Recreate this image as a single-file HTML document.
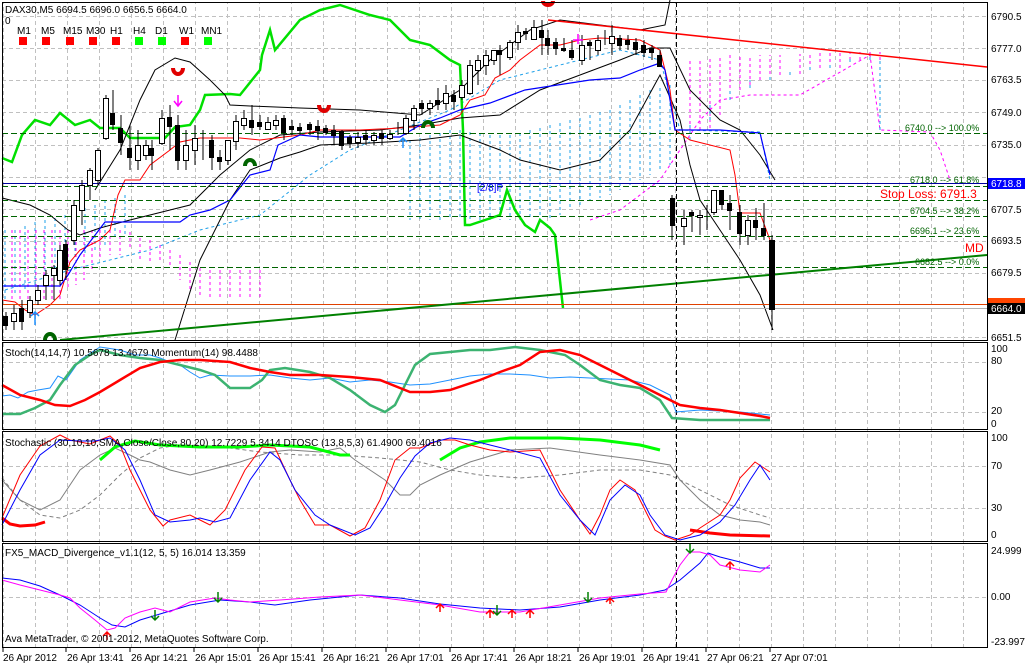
<!DOCTYPE html>
<html><head><meta charset="utf-8"><style>
html,body{margin:0;padding:0;background:#fff;width:1025px;height:664px;overflow:hidden}
svg{display:block}
text{font-family:"Liberation Sans",sans-serif;font-size:10px;fill:#000}
</style></head><body>
<svg width="1025" height="664" viewBox="0 0 1025 664" xmlns="http://www.w3.org/2000/svg">
<defs>
<pattern id="gx" x="3" y="0" width="32" height="700" patternUnits="userSpaceOnUse">
<line x1="0.5" y1="0" x2="0.5" y2="700" stroke="#c0c0c0" stroke-dasharray="4,3"/>
</pattern>
</defs>
<rect width="1025" height="664" fill="#fff"/>
<rect x="2" y="2" width="985" height="645" fill="url(#gx)"/>
<g stroke="#c0c0c0" stroke-dasharray="4,3">
<line x1="2" y1="16.5" x2="987" y2="16.5"/><line x1="2" y1="48.5" x2="987" y2="48.5"/><line x1="2" y1="80.5" x2="987" y2="80.5"/><line x1="2" y1="112.5" x2="987" y2="112.5"/><line x1="2" y1="145.5" x2="987" y2="145.5"/><line x1="2" y1="177.5" x2="987" y2="177.5"/><line x1="2" y1="209.5" x2="987" y2="209.5"/><line x1="2" y1="241.5" x2="987" y2="241.5"/><line x1="2" y1="273.5" x2="987" y2="273.5"/><line x1="2" y1="337.5" x2="987" y2="337.5"/>
<line x1="2" y1="362.5" x2="987" y2="362.5"/><line x1="2" y1="412.5" x2="987" y2="412.5"/>
<line x1="2" y1="466.5" x2="987" y2="466.5"/><line x1="2" y1="508.5" x2="987" y2="508.5"/>
<line x1="2" y1="597.5" x2="987" y2="597.5"/>
</g>

<g stroke="#ff00ff" stroke-dasharray="3,3" stroke-width="1" fill="none">
<path d="M12 230V300M20 230V300M28 230V300M36 230V300M44 230V300M52 230V300M60 230V300M68 230V290M76 230V285M84 230V280M92 230V270M100 230V260M110 230V255M120 230V255M130 232V250M140 238V262M150 240V262M160 245V262M170 250V268M180 255V280M190 262V290M200 268V295M210 270V300M220 270V300M230 270V300M240 270V300M250 270V300M260 270V298"/>
<path d="M690 130V60M700 130V58M710 128V56M720 115V55M730 100V55M740 90V55M750 85V55M760 80V55M770 80V55M780 75V55M800 74V54M810 70V53M820 68V53M830 68V53M840 68V52M850 60V52M860 60V52M870 60V52M880 60V52"/>
<path d="M590 220L620 210L640 195L660 180L680 150L700 120L720 100L750 95L800 95L870 55L880 130L930 132L940 150L950 180"/>
</g>
<g stroke="#1ea0e8" stroke-dasharray="3,3" stroke-width="1" fill="none">
<path d="M5 230V300M15 230V295M25 226V290M35 222V285M45 220V275M55 218V270M65 215V265M75 212V260M85 208V255M95 205V250M105 200V245M115 198V240M125 195V235"/>
<path d="M410 140V220M420 138V220M430 135V220M440 133V220M450 130V220M460 130V220M470 132V220M480 133V220M490 135V220M500 135V220M510 135V220M520 133V220M530 130V220M540 128V220M550 125V220M560 123V215M570 120V210M580 118V205M590 115V200M600 112V198M610 110V195M620 105V190M630 100V185M640 95V180M650 90V175M660 88V170M670 85V165"/>
<path d="M690 140V125M710 120V105M730 100V90M750 88V80M770 80V75M790 75V70M810 70V65M830 68V62M850 62V58M870 60V55M880 130V60"/>
<path d="M5 290L70 270L150 250L200 230L260 215L310 175L350 150L400 130L450 110L500 80L560 65L620 50L660 60L680 130L760 132L770 180"/>
</g>

<polyline fill="none" stroke="#00e000" stroke-width="2.5" points="2,158 12,162 22,135 35,120 50,125 60,113 75,125 90,120 100,128 120,128 130,138 150,138 165,138 175,127 190,125 200,110 205,95 230,94 240,95 260,70 262,55 270,30 275,50 300,20 320,10 340,5 370,15 390,20 410,40 430,45 450,60 460,65 463,130 465,225 470,225 500,215 507,190 515,210 525,225 535,232 540,220 550,228 555,235 563,308"/>

<g fill="none" stroke="#000" stroke-width="1">
<polyline points="95,190 120,150 140,100 155,70 175,58 190,62 210,80 225,95 230,105 250,106 300,108 360,110 420,115 460,90 490,60 530,30 560,20 600,25 640,30 665,25 670,0"/>
<polyline points="2,198 30,205 50,215 68,230 80,235 100,228 130,220 170,210 190,205 220,175 250,150 280,135 320,132 380,130 420,125 460,118 500,115 540,90 580,75 620,60 650,48 670,48 690,90 720,120 740,130 760,155 775,180"/>
<polyline points="175,340 200,260 230,200 250,170 280,158 300,152 320,145 370,143 420,140 460,135 500,150 520,160 560,170 600,160 630,130 660,75 680,120 690,165 700,200 720,230 740,260 760,295 773,330"/>
</g>
<polyline fill="none" stroke="#ff0000" stroke-width="1" points="2,300 15,302 25,310 35,315 50,305 60,295 70,262 80,250 100,240 110,230 118,195 125,180 140,180 150,165 170,150 180,142 200,138 240,138 260,140 300,135 320,130 360,130 400,128 440,125 460,115 470,100 485,95 495,78 510,70 520,60 540,45 560,45 580,40 600,38 640,40 660,50 670,90 675,130 690,140 730,150 735,175 740,213 760,213 770,240"/>
<polyline fill="none" stroke="#0000ff" stroke-width="1.2" points="2,286 60,286 68,275 80,255 105,222 180,222 190,215 210,210 230,200 250,175 270,170 278,145 300,135 320,137 360,137 400,137 420,125 440,118 460,110 490,103 525,90 590,80 620,78 640,70 660,63 665,70 675,130 720,130 760,133 770,175"/>

<g stroke="#006400" stroke-dasharray="6,3" stroke-width="1">
<line x1="2" y1="133.5" x2="987" y2="133.5"/><line x1="2" y1="186.5" x2="987" y2="186.5"/><line x1="2" y1="200.5" x2="987" y2="200.5"/><line x1="2" y1="216.5" x2="987" y2="216.5"/><line x1="2" y1="236.5" x2="987" y2="236.5"/><line x1="2" y1="267.5" x2="987" y2="267.5"/>
</g>
<line x1="2" y1="183.5" x2="987" y2="183.5" stroke="#0000a0"/>
<line x1="2" y1="304.5" x2="987" y2="304.5" stroke="#e04000"/>
<line x1="2" y1="308.5" x2="987" y2="308.5" stroke="#b0b0b0"/>
<line x1="60" y1="340" x2="987" y2="255" stroke="#008000" stroke-width="2"/>
<line x1="548" y1="20" x2="987" y2="67" stroke="#ff0000" stroke-width="1.5"/>
<line x1="676.5" y1="2" x2="676.5" y2="647" stroke="#000" stroke-dasharray="5,3"/>

<g stroke="#000" stroke-width="1">
<path d="M6 312V330M14 305V330M22 300V330M30 296V318M38 285V305M46 270V300M54 265V300M60 245V285M66 240V280M74 200V245M82 180V225M90 168V200M98 148V185M106 95V140M113 90V130M121 115V155M130 125V170M138 130V170M146 140V160M152 140V170M162 110V145M170 105V150M178 115V170M186 130V170M195 125V165M203 130V160M212 135V170M220 150V170M228 140V165M236 115V150M244 110V130M252 105V135M260 115V130M268 117V130M276 115V130M284 115V140M292 120V135M300 123V135M310 122V135M318 120V140M326 125V135M334 125V145M342 130V150M350 135V148M358 132V148M366 130V145M374 132V145M382 130V145M390 130V140M398 122V135M406 115V135M414 105V130M422 100V115M430 100V115M438 88V110M446 85V110M454 90V110M462 80V100M470 60V95M478 55V85M486 50V75M494 50V65M500 45V75M510 40V60M518 25V50M526 28V40M534 20V40M542 20V55M548 30V55M556 38V55M564 38V52M572 40V60M582 35V65M590 40V60M598 35V55M605 30V45M612 25V55M620 35V50M628 35V50M636 38V55M644 40V57M652 45V60M660 50V65M672 195V240M684 210V245M692 210V232M700 210V235M707 205V230M714 190V215M722 190V210M730 195V230M740 205V245M748 215V245M756 208V240M764 203V240M772 235V330"/>
</g>
<g stroke="#000" stroke-width="1" fill="#fff">
<rect x="11.5" y="313.5" width="5" height="8"/><rect x="27.5" y="300.5" width="5" height="12"/><rect x="35.5" y="290.5" width="5" height="10"/><rect x="43.5" y="275.5" width="5" height="10"/><rect x="51.5" y="268.5" width="5" height="7"/><rect x="57.5" y="250.5" width="5" height="30"/><rect x="71.5" y="205.5" width="5" height="35"/><rect x="79.5" y="185.5" width="5" height="25"/><rect x="87.5" y="170.5" width="5" height="15"/><rect x="95.5" y="150.5" width="5" height="30"/><rect x="103.5" y="98.5" width="5" height="40"/><rect x="135.5" y="145.5" width="5" height="15"/><rect x="143.5" y="145.5" width="5" height="10"/><rect x="159.5" y="118.5" width="5" height="25"/><rect x="183.5" y="145.5" width="5" height="15"/><rect x="192.5" y="138.5" width="5" height="12"/><rect x="225.5" y="140.5" width="5" height="20"/><rect x="233.5" y="121.5" width="5" height="20"/><rect x="241.5" y="118.5" width="5" height="7"/><rect x="265.5" y="122.5" width="5" height="7"/><rect x="273.5" y="120.5" width="5" height="5"/><rect x="355.5" y="137.5" width="5" height="5"/><rect x="371.5" y="135.5" width="5" height="5"/><rect x="387.5" y="134.5" width="5" height="4"/><rect x="403.5" y="118.5" width="5" height="15"/><rect x="411.5" y="108.5" width="5" height="12"/><rect x="427.5" y="103.5" width="5" height="5"/><rect x="443.5" y="93.5" width="5" height="10"/><rect x="459.5" y="85.5" width="5" height="12"/><rect x="467.5" y="65.5" width="5" height="28"/><rect x="475.5" y="60.5" width="5" height="10"/><rect x="483.5" y="55.5" width="5" height="10"/><rect x="491.5" y="50.5" width="5" height="10"/><rect x="507.5" y="42.5" width="5" height="15"/><rect x="515.5" y="32.5" width="5" height="10"/><rect x="531.5" y="27.5" width="5" height="12"/><rect x="579.5" y="45.5" width="5" height="15"/><rect x="595.5" y="40.5" width="5" height="10"/><rect x="609.5" y="36.5" width="5" height="7"/><rect x="681.5" y="218.5" width="5" height="8"/><rect x="697.5" y="215.5" width="5" height="2"/><rect x="711.5" y="190.5" width="5" height="22"/><rect x="745.5" y="220.5" width="5" height="15"/>
</g>
<g fill="#000">
<rect x="3" y="316" width="5" height="10"/><rect x="19" y="308" width="5" height="14"/><rect x="63" y="244" width="5" height="26"/><rect x="110" y="113" width="5" height="12"/><rect x="118" y="128" width="5" height="15"/><rect x="127" y="148" width="5" height="10"/><rect x="149" y="148" width="5" height="8"/><rect x="167" y="117" width="5" height="10"/><rect x="175" y="125" width="5" height="36"/><rect x="209" y="140" width="5" height="18"/><rect x="217" y="157" width="5" height="5"/><rect x="249" y="120" width="5" height="8"/><rect x="257" y="122" width="5" height="5"/><rect x="281" y="118" width="5" height="15"/><rect x="289" y="126" width="5" height="4"/><rect x="297" y="127" width="5" height="4"/><rect x="307" y="124" width="5" height="6"/><rect x="315" y="126" width="5" height="5"/><rect x="323" y="128" width="5" height="5"/><rect x="331" y="130" width="5" height="6"/><rect x="339" y="131" width="5" height="15"/><rect x="347" y="137" width="5" height="7"/><rect x="363" y="135" width="5" height="5"/><rect x="379" y="133" width="5" height="6"/><rect x="419" y="103" width="5" height="6"/><rect x="435" y="100" width="5" height="5"/><rect x="451" y="95" width="5" height="7"/><rect x="497" y="50" width="5" height="5"/><rect x="523" y="31" width="5" height="3"/><rect x="539" y="30" width="5" height="8"/><rect x="545" y="38" width="5" height="8"/><rect x="553" y="42" width="5" height="7"/><rect x="561" y="48" width="5" height="3"/><rect x="569" y="50" width="5" height="8"/><rect x="587" y="42" width="5" height="4"/><rect x="617" y="38" width="5" height="8"/><rect x="625" y="40" width="5" height="5"/><rect x="633" y="42" width="5" height="8"/><rect x="641" y="45" width="5" height="8"/><rect x="649" y="48" width="5" height="5"/><rect x="657" y="55" width="5" height="12"/><rect x="670" y="198" width="5" height="28"/><rect x="689" y="212" width="5" height="4"/><rect x="719" y="190" width="5" height="15"/><rect x="727" y="203" width="5" height="8"/><rect x="737" y="212" width="5" height="22"/><rect x="753" y="220" width="5" height="8"/><rect x="761" y="228" width="5" height="8"/><rect x="769" y="240" width="6" height="70"/>
</g>

<g fill="none" stroke-width="1.5"><path stroke="#ff00ff" d="M178 95V105M174 101L178 106L182 101"/><path stroke="#ff00ff" d="M578 34V44M573 40H583"/></g>
<g fill="none" stroke="#1e90ff" stroke-width="1.5"><path d="M35 325V312M31 316L35 312L39 316"/><path d="M403 148V138M399 142L403 138L407 142"/></g>
<g fill="none" stroke="#e00000" stroke-width="4"><path d="M173 68A5 6 0 1 0 183 68"/><path d="M319 105A5 6 0 1 0 329 105"/><path d="M543 1A5 4 0 0 0 553 1"/></g>
<g fill="none" stroke="#006400" stroke-width="4"><path d="M245 166A5 6 0 1 1 255 166"/><path d="M423 128A5 6 0 1 1 433 128"/><path d="M45 340A5 6 0 1 1 55 340"/></g>

<text x="5" y="13">DAX30,M5  6694.5 6696.0 6656.5 6664.0</text>
<text x="5" y="24">0</text>
<g><text x="17" y="34">M1</text><text x="41" y="34">M5</text><text x="63" y="34">M15</text><text x="86" y="34">M30</text><text x="110" y="34">H1</text><text x="133" y="34">H4</text><text x="155" y="34">D1</text><text x="179" y="34">W1</text><text x="201" y="34">MN1</text></g>
<g><rect x="19" y="37" width="8" height="8" fill="#f00"/><rect x="42" y="37" width="8" height="8" fill="#f00"/><rect x="66" y="37" width="8" height="8" fill="#f00"/><rect x="89" y="37" width="8" height="8" fill="#f00"/><rect x="112" y="37" width="8" height="8" fill="#f00"/><rect x="135" y="37" width="8" height="8" fill="#0f0"/><rect x="158" y="37" width="8" height="8" fill="#0f0"/><rect x="181" y="37" width="8" height="8" fill="#f00"/><rect x="204" y="37" width="8" height="8" fill="#0f0"/></g>
<text x="477" y="191" style="fill:#0000ff">[2/8]P</text>
<text x="905" y="131" style="fill:#006400;font-size:9px">6740.0 --&gt; 100.0%</text><text x="910" y="183" style="fill:#006400;font-size:9px">6718.0 --&gt; 61.8%</text><text x="910" y="214" style="fill:#006400;font-size:9px">6704.5 --&gt; 38.2%</text><text x="910" y="234" style="fill:#006400;font-size:9px">6696.1 --&gt; 23.6%</text><text x="915" y="265" style="fill:#006400;font-size:9px">6682.5 --&gt; 0.0%</text>
<text x="880" y="198" style="fill:#ff0000;font-size:12px">Stop Loss: 6791.3</text>
<text x="965" y="252" style="fill:#ff0000;font-size:12px">MD</text>

<polyline fill="none" stroke="#1e90ff" points="2,396 10,395 18,398 28,392 38,390 50,388 58,376 66,380 80,360 100,347 120,350 135,355 150,355 160,358 170,362 180,365 190,372 200,378 210,375 230,376 250,376 270,375 290,378 310,380 330,378 350,382 370,380 390,382 410,385 430,384 450,380 470,376 490,374 510,374 530,375 550,378 570,377 590,378 610,379 630,380 650,385 670,395 676,412 700,410 740,412 770,415"/>
<polyline fill="none" stroke="#3cb371" stroke-width="2.5" points="2,414 20,414 35,408 50,400 60,385 75,365 90,355 100,350 120,355 140,358 160,360 180,365 200,370 215,375 230,388 250,388 262,380 270,370 285,368 310,372 330,378 350,390 370,405 385,412 395,405 405,385 415,365 430,354 450,352 470,350 490,350 515,347 540,350 565,355 580,365 600,380 620,385 640,388 660,400 672,418 700,420 740,420 770,420"/>
<polyline fill="none" stroke="#ff0000" stroke-width="2.5" points="2,385 20,395 40,400 55,405 70,406 85,400 100,392 120,380 140,368 160,362 180,360 200,360 230,362 250,368 270,372 290,375 320,375 350,377 380,380 400,388 410,392 430,392 450,390 480,380 500,372 520,365 540,352 560,350 580,355 600,365 620,375 640,385 660,395 680,405 700,408 720,410 740,413 760,416 770,418"/>
<text x="5" y="356">Stoch(14,14,7) 10.5678 13.4679  Momentum(14) 98.4488</text>

<polyline fill="none" stroke="#808080" points="2,480 20,500 40,510 60,500 80,470 100,455 115,448 130,455 140,460 150,462 170,470 190,475 210,470 240,462 270,452 290,450 320,452 340,448 355,460 370,470 385,480 400,495 410,495 420,485 440,475 470,462 510,450 550,448 600,455 640,460 670,465 680,480 700,500 720,515 740,520 760,522 770,525"/>
<polyline fill="none" stroke="#808080" stroke-dasharray="4,3" points="2,478 20,500 40,515 60,518 80,510 100,495 120,475 140,458 160,448 180,445 200,445 230,448 260,452 300,455 340,455 380,458 420,462 450,470 480,475 520,478 560,475 600,470 640,470 670,475 700,490 730,505 760,515 770,518"/>
<polyline fill="none" stroke="#00ff00" stroke-width="3" points="100,460 115,447 135,441 160,445 200,447 240,447 270,445 310,447 340,455 350,455"/>
<polyline fill="none" stroke="#00ff00" stroke-width="3" points="440,460 460,448 480,442 510,438 560,438 600,440 640,445 660,450"/>
<polyline fill="none" stroke="#ff0000" stroke-width="3" points="2,518 10,524 20,526 35,525 45,522"/>
<polyline fill="none" stroke="#ff0000" stroke-width="3" points="690,530 710,533 730,535 770,536"/>
<polyline fill="none" stroke="#ff0000" points="2,518 20,475 40,446 60,435 70,440 90,444 110,436 120,445 130,470 150,510 163,526 170,520 190,515 200,520 210,525 225,510 245,470 262,447 275,448 290,480 300,500 315,525 330,525 350,536 365,528 380,500 395,460 410,448 420,448 430,444 440,440 455,440 470,445 490,450 510,452 540,450 560,490 580,520 590,534 600,515 610,490 620,480 635,490 645,510 655,530 665,536 675,540 690,535 700,528 720,515 730,500 740,478 755,462 770,472"/>
<polyline fill="none" stroke="#0000ff" points="2,525 20,490 40,455 60,440 80,441 95,441 110,438 125,450 140,480 155,515 170,522 190,520 200,518 215,522 230,518 250,480 270,452 280,460 295,490 315,515 330,525 355,535 370,528 385,505 400,478 415,456 430,443 450,438 470,440 490,445 510,450 540,458 560,495 580,520 595,535 610,500 625,485 640,495 650,515 665,535 680,540 700,535 720,522 735,505 750,480 760,465 770,480"/>
<text x="5" y="446">Stochastic (30,10,10,SMA,Close/Close,80,20) 12.7229  5.3414  DTOSC (13,8,5,3) 61.4900 69.4016</text>

<polyline fill="none" stroke="#0000ff" points="2,578 20,580 40,586 60,595 80,605 100,618 112,625 125,627 140,620 160,614 190,605 220,600 250,602 275,605 310,600 360,595 400,598 440,604 480,608 520,610 560,607 600,600 640,595 665,590 680,580 700,563 708,553 720,557 740,562 760,568 770,568"/>
<polyline fill="none" stroke="#ff00ff" points="2,580 20,585 40,590 60,595 70,598 80,608 95,620 107,630 115,628 125,618 140,612 155,608 170,612 190,602 215,598 230,600 250,602 280,600 320,597 360,595 400,600 440,605 480,612 520,612 560,605 600,598 640,594 666,592 673,578 680,565 690,552 700,552 710,555 720,565 740,570 760,572 770,565"/>
<g stroke-width="1.5" fill="none"><path stroke="#008000" d="M155 610V620M151 616L155 620L159 616M218 592V602M214 598L218 602L222 598M497 605V615M493 611L497 615L501 611M588 592V602M584 598L588 602L592 598M690 543V553M686 549L690 553L694 549"/><path stroke="#ff0000" d="M107 640V632M103 636L107 632L111 636M440 612V604M436 608L440 604L444 608M490 618V610M486 614L490 610L494 614M512 618V610M508 614L512 610L516 614M530 618V610M526 614L530 610L534 614M610 604V598M606 602L610 598L614 602M730 570V562M726 566L730 562L734 566"/></g>
<text x="5" y="556">FX5_MACD_Divergence_v1.1(12, 5, 5) 16.014 13.359</text>
<text x="5" y="642">Ava MetaTrader, © 2001-2012, MetaQuotes Software Corp.</text>

<g fill="none" stroke="#000" stroke-width="1">
<rect x="2.5" y="2.5" width="985" height="338"/>
<rect x="2.5" y="342.5" width="985" height="87"/>
<rect x="2.5" y="431.5" width="985" height="110"/>
<rect x="2.5" y="543.5" width="985" height="104"/>
</g>
<g>
<text x="991" y="20">6790.5</text><text x="991" y="52">6777.0</text><text x="991" y="83">6763.5</text><text x="991" y="116">6749.0</text><text x="991" y="148">6735.0</text><text x="991" y="213">6707.5</text><text x="991" y="244">6693.5</text><text x="991" y="276">6679.5</text><text x="991" y="341">6651.5</text>
<rect x="988" y="178" width="37" height="11" fill="#0000ff"/><text x="991" y="187" style="fill:#fff">6718.8</text>
<rect x="988" y="298" width="37" height="6" fill="#ff4500"/>
<rect x="988" y="303" width="37" height="11" fill="#000"/><text x="991" y="312" style="fill:#fff">6664.0</text>
<text x="991" y="352">100</text><text x="991" y="364">80</text><text x="991" y="414">20</text><text x="991" y="427">0</text>
<text x="991" y="441">100</text><text x="991" y="469">70</text><text x="991" y="511">30</text><text x="991" y="538">0</text>
<text x="991" y="554">24.999</text><text x="991" y="600">0.00</text><text x="991" y="645">-23.997</text>
</g>
<g stroke="#000"><path d="M3 648V652M66 648V652M130 648V652M194 648V652M258 648V652M322 648V652M386 648V652M450 648V652M514 648V652M578 648V652M642 648V652M706 648V652M770 648V652"/></g>
<g>
<text x="3" y="661">26 Apr 2012</text><text x="67" y="661">26 Apr 13:41</text><text x="131" y="661">26 Apr 14:21</text><text x="195" y="661">26 Apr 15:01</text><text x="259" y="661">26 Apr 15:41</text><text x="323" y="661">26 Apr 16:21</text><text x="387" y="661">26 Apr 17:01</text><text x="451" y="661">26 Apr 17:41</text><text x="515" y="661">26 Apr 18:21</text><text x="579" y="661">26 Apr 19:01</text><text x="643" y="661">26 Apr 19:41</text><text x="707" y="661">27 Apr 06:21</text><text x="771" y="661">27 Apr 07:01</text>
</g>
</svg>
</body></html>
